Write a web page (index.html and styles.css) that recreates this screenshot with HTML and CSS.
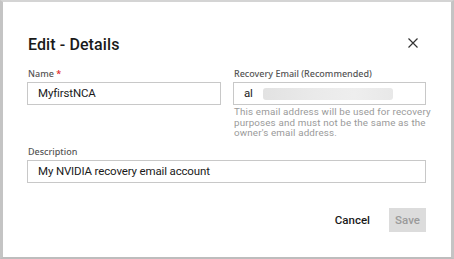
FILE: index.html
```html
<!DOCTYPE html>
<html>
<head>
<meta charset="utf-8">
<link rel="stylesheet" href="styles.css">
</head>
<body>
<div class="frame">
  <div class="dialog">
    <div class="header">
      <h1 class="title">Edit - Details</h1>
      <button class="close" aria-label="Close">
        <svg width="10" height="10" viewBox="0 0 10 10"><path d="M0.5 0.5L9.5 9.5M9.5 0.5L0.5 9.5" stroke="#333" stroke-width="1.2" fill="none"/></svg>
      </button>
    </div>
    <div class="grid">
      <div class="field">
        <label class="label">Name <span class="req">*</span></label>
        <div class="input">MyfirstNCA</div>
      </div>
      <div class="field">
        <label class="label">Recovery Email (Recommended)</label>
        <div class="input">al<span class="blur"></span></div>
        <p class="help">This email address will be used for recovery<br>purposes and must not be the same as the<br>owner's email address.</p>
      </div>
    </div>
    <div class="field desc">
      <label class="label">Description</label>
      <div class="input">My NVIDIA recovery email account</div>
    </div>
    <div class="footer">
      <button class="cancel">Cancel</button>
      <button class="save">Save</button>
    </div>
  </div>
</div>
</body>
</html>
```
FILE: styles.css
```css
* { box-sizing: border-box; }
html, body { margin: 0; padding: 0; background: #fff; }
body { font-family: "Noto Sans", "Open Sans", sans-serif; color: #1a1a1a; }
.frame {
  width: 454px; height: 259px;
  border-top: 2px solid #d4d4d4;
  border-left: 3px solid #c4c4c4;
  border-right: 3px solid #c4c4c4;
  border-bottom: 2px solid #bdbdbd;
  background: #fff;
}
.dialog { padding: 30px 25px 0 24px; }
.header { display: flex; justify-content: space-between; align-items: center; height: 24px; }
.title { margin: 0 0 0 1px; font-family: Roboto, "Noto Sans", sans-serif; font-size: 16px; font-weight: 500; color: #1a1a1a; letter-spacing: 0.1px; }
.close { border: 0; background: none; padding: 0; width: 12px; height: 12px; margin-right: 7px; margin-top: -2px; display: flex; align-items: center; justify-content: center; }
.grid { display: grid; grid-template-columns: 194px 193px; column-gap: 12px; margin-top: 12px; }
.field { display: flex; flex-direction: column; }
.label { font-size: 9px; color: #555; font-weight: 500; height: 12px; line-height: 12px; margin-bottom: 2px; padding-left: 1px; }
.req { color: #e02020; }
.input {
  height: 23px; border: 1px solid #c8c8c8; font-family: Roboto, "Noto Sans", sans-serif; font-size: 11.5px; letter-spacing: -0.15px; line-height: 21px;
  padding: 0 10px; color: #1a1a1a; display: flex; align-items: center;
}
.blur { display: inline-block; width: 130px; height: 12px; margin-left: 10px;
  background: linear-gradient(90deg, #e2e2e2, #eaeaea 40%, #eeeeee 70%, #e8e8e8); border-radius: 3px; }
.help { margin: 2px -8px 0 1px; font-family: Roboto, "Noto Sans", sans-serif; font-size: 9.8px; line-height: 10.5px; letter-spacing: 0.15px; color: #9a9a9a; white-space: nowrap; }
.desc { margin-top: 7px; width: 399px; }
.footer { display: flex; justify-content: flex-end; align-items: center; gap: 19px; margin-top: 25px; }
.cancel { border: 0; background: none; padding: 0; font-family: Roboto, "Noto Sans", sans-serif; font-size: 11.5px; font-weight: 500; color: #1a1a1a; }
.save { border: 0; background: #dcdcdc; color: #9a9a9a; font-family: Roboto, "Noto Sans", sans-serif; font-size: 11.5px; font-weight: 500; width: 37px; height: 24px; padding: 0; }
```
